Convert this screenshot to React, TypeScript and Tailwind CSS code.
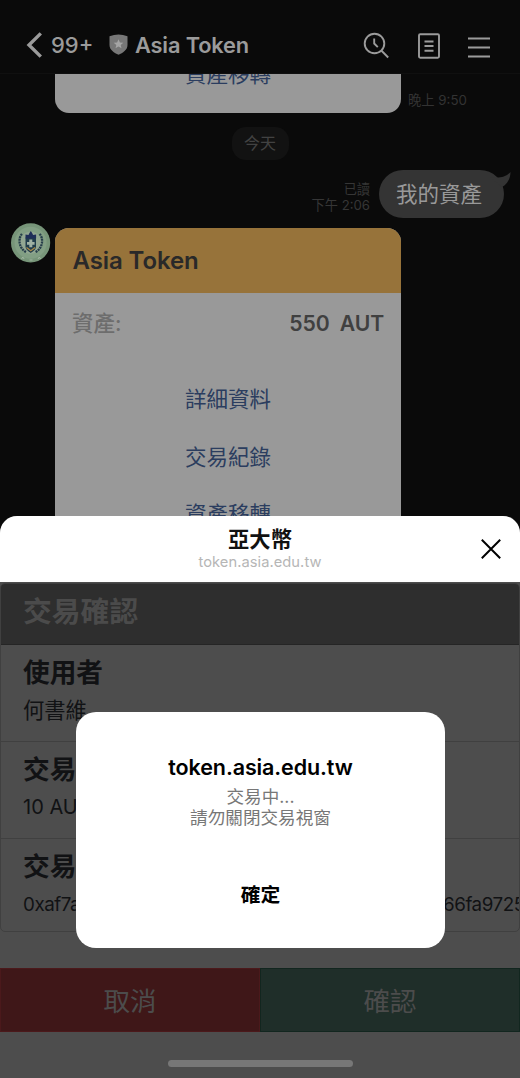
import type { ReactNode } from "react";

function ChatHeader() {
  return (
    <header className="flex h-[74px] shrink-0 items-end border-b border-[#101010] pb-[11px] pl-[26px] text-[#9b9b9b]">
      <svg className="mb-[3px] h-[28px] w-[17px]" viewBox="0 0 17 28" fill="none" stroke="currentColor" strokeWidth="3.4">
        <path d="M14.8 2.4 3 14l11.8 11.6" />
      </svg>
      <span className="ml-2 w-[43px] whitespace-nowrap text-[22px] font-medium leading-[34px]">99+</span>
      <svg className="mb-[7px] ml-[15px] h-[21px] w-[19px]" viewBox="0 0 19 21">
        <path d="M.5 2.3Q9.5-1.4 18.5 2.3V11c0 5-4.8 8-9 9.8C5.300 19 .5 16 .5 11Z" fill="#777777" />
        <path d="m9.500 5.300 1.400 3.100 3.400.3-2.600 2.200.8 3.300-3-1.800-3 1.800.8-3.300-2.600-2.200 3.400-.3Z" fill="#a5a5a5" />
      </svg>
      <span className="ml-[7px] whitespace-nowrap text-[21.800px] font-semibold leading-[34px] tracking-[-.15px]">Asia Token</span>
      <div className="ml-auto mr-[30px] flex items-center pb-[3px]">
        <svg className="h-[28px] w-[27px]" viewBox="0 0 27 28" fill="none" stroke="currentColor" strokeWidth="1.900">
          <circle cx="11.500" cy="12.500" r="9.800" />
          <path d="m18.300 19.500 6.900 7M11.200 7.500v5l3.600 3.700" />
        </svg>
        <svg className="ml-[28px] h-[28px] w-[22px]" viewBox="0 0 22 28" fill="none" stroke="currentColor" strokeWidth="1.900">
          <rect x="1" y="3.200" width="20" height="23.500" rx="1.200" />
          <path d="M6.500 10.500h9M6.500 15h9M6.500 19.700h9" />
        </svg>
        <svg className="ml-[28px] h-[28px] w-[22px]" viewBox="0 0 22 28" fill="none" stroke="currentColor" strokeWidth="1.900">
          <path d="M0 7.500h22M0 16.500h22M0 25.500h22" />
        </svg>
      </div>
    </header>
  );
}

function Avatar() {
  return (
    <svg className="-mt-[5.500px] ml-[11px] h-[40px] w-[40px] shrink-0" viewBox="0 0 40 40">
      <circle cx="19.600" cy="19.800" r="19.600" fill="#779579" />
      <circle cx="19.600" cy="19.800" r="16" fill="#829f84" />
      <circle cx="19.600" cy="19.800" r="11" fill="#92a792" />
      <g fill="none" stroke="#263d4a" strokeWidth="2.300" strokeDasharray="2 .7">
        <path d="M11 11C7 15 7.500 25 15 29M28.600 11c4 4 3.500 14-4 18" />
      </g>
      <path d="M14.500 14.500h10.500v9c0 3-3 5-5.250 6.400-2.250-1.400-5.250-3.400-5.250-6.400Z" fill="#203d4b" />
      <path d="M14.500 15.500v-4l3 .5 1-2 1.300-2 1.300 2 1 2 3-.5v4Z" fill="#1f2e58" />
      <path d="M18.300 16.500h3v2.500h2.300v2.800h-2.300v2.500h-3v-2.500H16V19h2.300Z" fill="#9fb1a3" />
      <path d="m15.500 24.500 4.300 3.300 4.300-3.300" fill="none" stroke="#aa8948" strokeWidth="1.300" />
      <path d="m10.500 36 1.300-2 1.300 2M18.500 37h3M27 36l1.300-2 1.300 2" fill="none" stroke="#a5b8a5" strokeWidth=".9" />
    </svg>
  );
}

function CardLink({ children }: { children: ReactNode }) {
  return <div className="flex h-[58px] shrink-0 items-center justify-center text-[21.500px] leading-[30px] text-[#2b3d5f]">{children}</div>;
}

function Chat() {
  return (
    <main className="flex h-[442px] shrink-0 flex-col overflow-hidden">
      <div className="flex h-[39px] shrink-0 items-end pl-[55px]">
        <div className="h-[39px] w-[346px] shrink-0 overflow-hidden rounded-b-[14px] bg-[#999999]">
          <div className="-mt-[15px] text-center text-[21.500px] leading-[30px] text-[#2b3d5f]">資產移轉</div>
        </div>
        <span className="ml-[7px] whitespace-nowrap text-[13.300px] leading-[26px] text-[#333333]">晚上 9:50</span>
      </div>
      <div className="mt-[14px] flex h-[33px] w-[57px] shrink-0 items-center justify-center self-center rounded-[14px] bg-[#121212] pb-[2px] text-[16px] text-[#424242]">今天</div>
      <div className="mt-[10px] flex h-[48px] shrink-0 justify-end pr-[16px]">
        <div className="mr-[9px] pt-[11px] text-right text-[13.200px] leading-[16px] text-[#363636]">
          <div>已讀</div>
          <div className="whitespace-nowrap">下午 2:06</div>
        </div>
        <div className="relative flex h-[48px] w-[125px] items-center rounded-[24px] bg-[#343434] pl-[17px] text-[21.500px] text-[#999999]">
          我的資產
          <svg className="absolute -right-[7px] top-[1px] h-[22px] w-[23px]" viewBox="0 0 23 22">
            <path d="M2 6c8 1 15 1 20.500-5C22.500 8 19 13 14 16Z" fill="#343434" />
          </svg>
        </div>
      </div>
      <div className="mt-[10px] flex shrink-0">
        <Avatar />
        <section className="ml-[4px] h-[310px] w-[346px] rounded-t-[14px] bg-[#999999]">
          <div className="flex h-[65px] items-center rounded-t-[14px] bg-[#97733a] pl-[17.500px] text-[24px] font-semibold tracking-[-.1px] text-[#292929]">Asia Token</div>
          <div className="mb-[17px] flex h-[60px] items-center justify-between px-[17px]">
            <span className="text-[21.500px] font-medium text-[#6d6d6d]">資產:</span>
            <span className="whitespace-pre pt-px text-[21.200px] font-semibold tracking-[-.15px] text-[#404040]">550  AUT</span>
          </div>
          <CardLink>詳細資料</CardLink>
          <CardLink>交易紀錄</CardLink>
          <div className="-mt-px"><CardLink>資產移轉</CardLink></div>
        </section>
      </div>
    </main>
  );
}

function DetailRow({ label, children }: { label: string; children: ReactNode }) {
  return (
    <div className="h-[97px] overflow-hidden border-b border-[#404040] pl-[22px] pt-[9px] text-[#111214]">
      <div className="text-[26.700px] font-bold leading-[36px]">{label}</div>
      <div className="mt-[5px] whitespace-nowrap text-[20px] leading-[30px]">{children}</div>
    </div>
  );
}

function TransactionSheet() {
  return (
    <section className="flex h-[562px] shrink-0 flex-col overflow-hidden rounded-t-[17px] bg-[#4d4d4d]">
      <header className="grid h-[66px] shrink-0 grid-cols-[60px_1fr_60px] bg-white">
        <div className="col-start-2 pt-[8px] text-center">
          <h1 className="text-[21.300px] font-bold leading-[30px] text-[#111111]">亞大幣</h1>
          <div className="text-[14.700px] leading-[17px] tracking-[.05px] text-[#b6b6b6]">token.asia.edu.tw</div>
        </div>
        <svg className="ml-[20.500px] mt-[23px] h-[20px] w-[20px]" viewBox="0 0 20 20" fill="none" stroke="#000" strokeWidth="2">
          <path d="m.8.8 18.400 18.400M19.200.8.8 19.200" />
        </svg>
      </header>
      <div className="mt-px h-[349px] shrink-0 overflow-hidden rounded-[5px] border border-[#404040]">
        <h2 className="h-[61px] border-b border-[#252525] bg-[#2e2e2e] pl-[22px] pt-[6px] text-[28.800px] font-bold leading-[44px] text-[#4b4b4b]">交易確認</h2>
        <DetailRow label="使用者"><span className="text-[21.300px]">何書維</span></DetailRow>
        <DetailRow label="交易金額">10 AUT</DetailRow>
        <DetailRow label="交易對象">
          <div className="flex pt-px text-[18.800px] tracking-[-.45px]">
            <span className="w-[420px] shrink-0 overflow-hidden">0xaf7a83bc914e620d5f7831c0b94</span>
            <span>66fa9725</span>
          </div>
        </DetailRow>
      </div>
      <div className="mt-[36px] grid h-[64px] shrink-0 grid-cols-2 text-[26.500px] text-[#4c4c4c]">
        <button className="border border-[#4b191b] bg-[#3f1718] pt-[3px]">取消</button>
        <button className="border border-[#12261f] bg-[#1f2e29] pt-[3px]">確認</button>
      </div>
      <div className="mt-[28px] h-[7px] w-[185px] shrink-0 self-center rounded-full bg-[#777777]" />
    </section>
  );
}

function AlertDialog() {
  return (
    <div role="alertdialog" className="absolute left-[76px] top-[712px] flex h-[236px] w-[369px] flex-col items-center rounded-[20px] bg-white">
      <h2 className="mt-[39px] text-[21.500px] font-semibold leading-[32px] tracking-[-.1px] text-black">token.asia.edu.tw</h2>
      <div className="mt-[3px] text-center text-[17.600px] leading-[21px] text-[#777777]">交易中...<br />請勿關閉交易視窗</div>
      <button className="mt-[52px] text-[19.800px] font-bold leading-[30px] text-black">確定</button>
    </div>
  );
}

export default function App() {
  return (
    <div className="relative h-[1078px] w-[520px] overflow-hidden bg-[#0a0a0a] font-[Inter,'Noto_Sans_CJK_TC',sans-serif]">
      <ChatHeader />
      <Chat />
      <TransactionSheet />
      <AlertDialog />
    </div>
  );
}
